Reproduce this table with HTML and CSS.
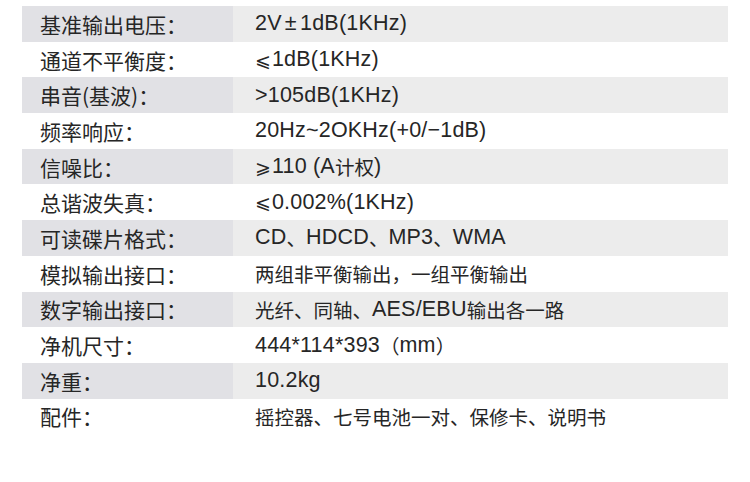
FILE: index.html
```html
<!DOCTYPE html>
<html lang="zh-CN">
<head>
<meta charset="utf-8">
<title>规格参数</title>
<link rel="stylesheet" href="styles.css">
</head>
<body>
<div class="specs">
  <div class="row"><div class="label">基准输出电压：</div><div class="value"><span class="en tight">2V ± 1dB(1KHz)</span></div></div>
  <div class="row"><div class="label">通道不平衡度：</div><div class="value"><span class="sym">⩽</span><span class="en">1dB(1KHz)</span></div></div>
  <div class="row"><div class="label">串音(基波)：</div><div class="value"><span class="en">&gt;105dB(1KHz)</span></div></div>
  <div class="row"><div class="label">频率响应：</div><div class="value"><span class="en">20Hz~2OKHz(+0/−1dB)</span></div></div>
  <div class="row"><div class="label">信噪比：</div><div class="value"><span class="sym">⩾</span><span class="en">110 (A</span>计权<span class="en">)</span></div></div>
  <div class="row"><div class="label">总谐波失真：</div><div class="value"><span class="sym">⩽</span><span class="en">0.002%(1KHz)</span></div></div>
  <div class="row"><div class="label">可读碟片格式：</div><div class="value"><span class="en">CD</span>、<span class="en">HDCD</span>、<span class="en">MP3</span>、<span class="en">WMA</span></div></div>
  <div class="row"><div class="label">模拟输出接口：</div><div class="value">两组非平衡输出，一组平衡输出</div></div>
  <div class="row"><div class="label">数字输出接口：</div><div class="value">光纤、同轴、<span class="en">AES/EBU</span>输出各一路</div></div>
  <div class="row"><div class="label">净机尺寸：</div><div class="value"><span class="en">444*114*393</span>（<span class="en">mm</span>）</div></div>
  <div class="row"><div class="label">净重：</div><div class="value"><span class="en">10.2kg</span></div></div>
  <div class="row"><div class="label">配件：</div><div class="value">摇控器、七号电池一对、保修卡、说明书</div></div>
</div>
</body>
</html>
```

FILE: styles.css
```css
html, body {
  margin: 0;
  padding: 0;
  background: #ffffff;
}

body {
  width: 750px;
  height: 482px;
  overflow: hidden;
  font-family: "Liberation Sans", "Noto Sans CJK SC", sans-serif;
  color: #262626;
}

.specs {
  padding: 6px 22px 0 22px;
  display: flex;
  flex-direction: column;
}

.row {
  display: grid;
  grid-template-columns: 211px 1fr;
  height: 35.7px;
  align-items: stretch;
}

.label,
.value {
  display: flex;
  align-items: center;
  white-space: pre;
}

.label {
  padding-left: 18px;
  font-size: 21px;
  font-family: "Noto Sans CJK SC", sans-serif;
}

.value {
  padding-left: 22px;
  font-size: 19.5px;
  font-family: "Noto Sans CJK SC", sans-serif;
}

.en {
  font-family: "Liberation Sans", sans-serif;
  font-size: 21.5px;
  letter-spacing: 0.2px;
}

.tight {
  word-spacing: -3px;
}

.sym {
  font-family: "DejaVu Sans", sans-serif;
  font-size: 19px;
  margin-right: 1px;
}

.row:nth-child(odd) .label {
  background: #e1e1e5;
}

.row:nth-child(odd) .value {
  background: #ececec;
}
```
